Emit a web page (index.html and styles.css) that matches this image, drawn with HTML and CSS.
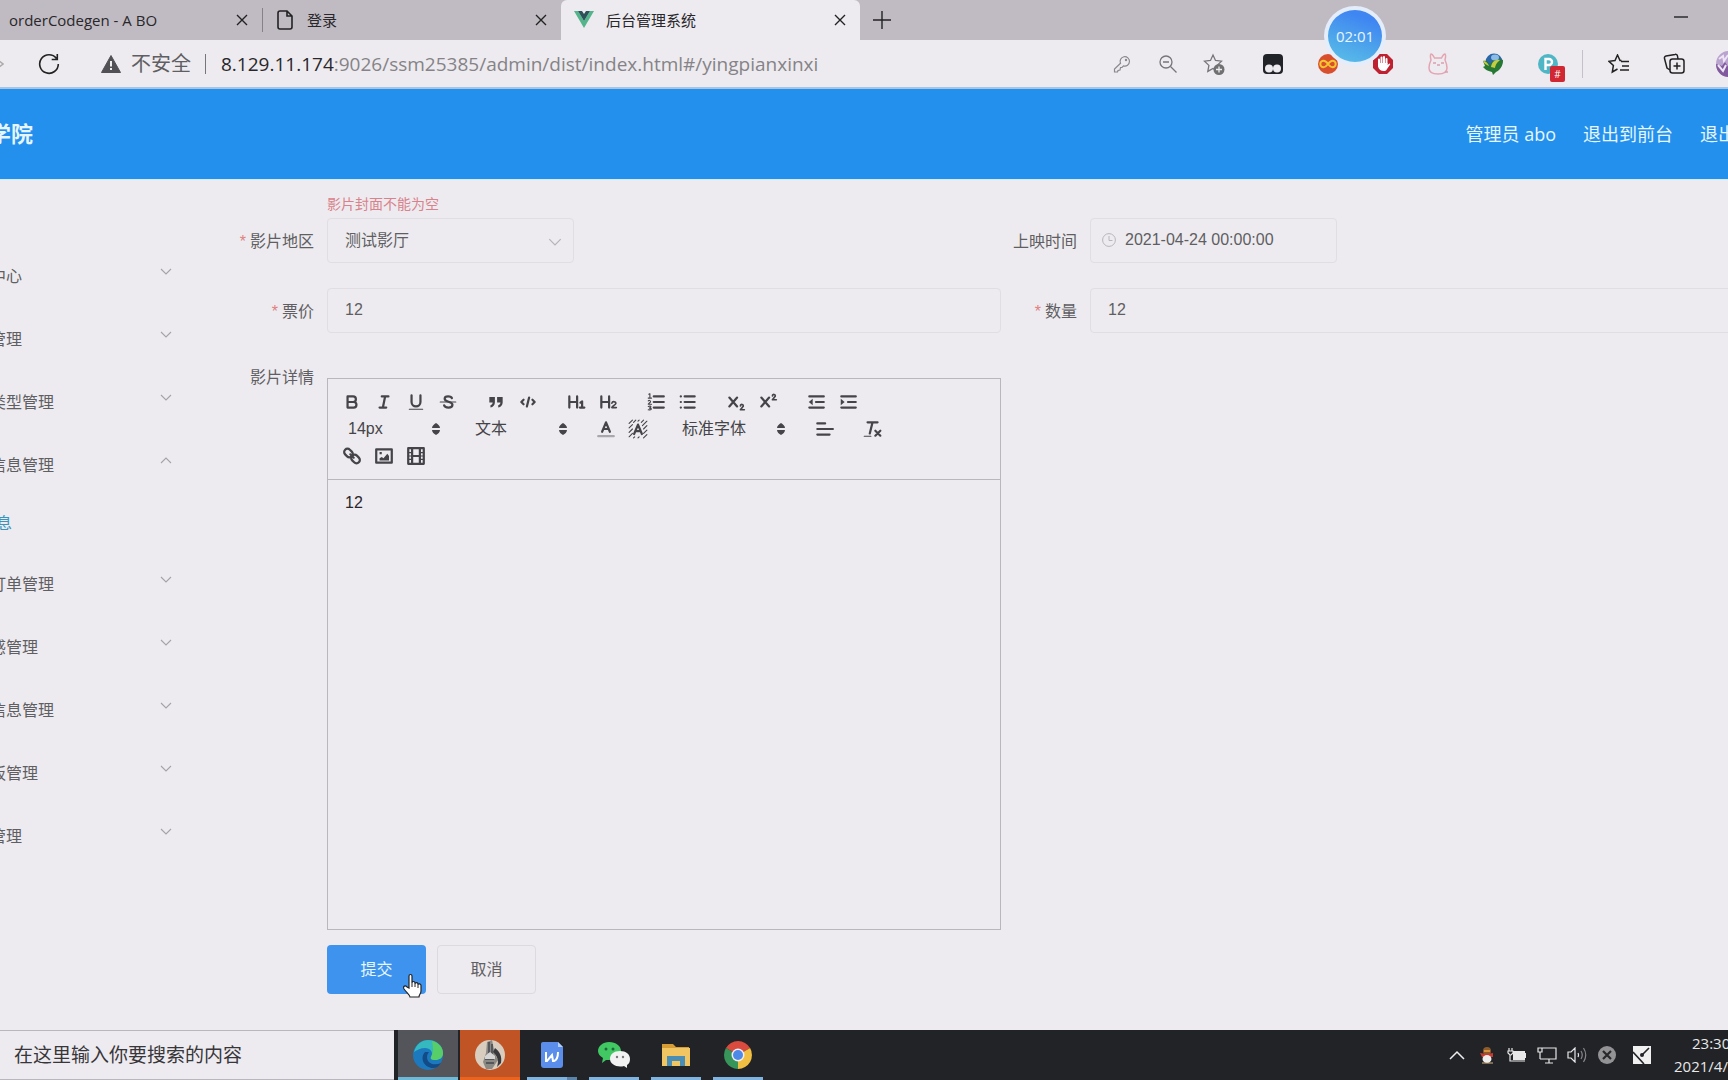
FILE: index.html
```html
<!DOCTYPE html>
<html lang="zh-CN">
<head>
<meta charset="utf-8">
<title>后台管理系统</title>
<link rel="stylesheet" href="styles.css">
</head>
<body>
<svg class="sprite" aria-hidden="true">
  <symbol id="close" viewBox="0 0 12 12"><path d="M1 1l10 10M11 1L1 11" fill="none" stroke="#222" stroke-width="1.4"/></symbol>
  <symbol id="chevron" viewBox="0 0 12 7"><path d="M1 1l5 5 5-5" fill="none" stroke="currentColor" stroke-width="1.1"/></symbol>
  <symbol id="updown" viewBox="0 0 8 12"><path d="M4 0C6 1 8 3 8 5H0C0 3 2 1 4 0zM0 7h8c0 2-2 4-4 5C2 11 0 9 0 7z" fill="currentColor"/></symbol>
</svg>

<div class="tabstrip">
  <div class="tab tab-first"><span class="tab-title">orderCodegen - A BO</span><button class="tab-close" aria-label="关闭"><svg width="12" height="12"><use href="#close"/></svg></button></div>
  <div class="tab tab-second">
    <svg class="file-icon" width="16" height="20" viewBox="0 0 16 20"><path d="M3 1h7l5 5v11a2 2 0 0 1-2 2H3a2 2 0 0 1-2-2V3a2 2 0 0 1 2-2zM10 1v5h5" fill="none" stroke="#222" stroke-width="1.6"/></svg>
    <span class="tab-title">登录</span><button class="tab-close" aria-label="关闭"><svg width="12" height="12"><use href="#close"/></svg></button>
  </div>
  <div class="tab tab-active">
    <svg width="20" height="17" viewBox="0 0 20 17"><path d="M0 0h4l6 10L16 0h4L10 17z" fill="#53b58c"/><path d="M4 0h4l2 3 2-3h4l-6 10z" fill="#2d5158"/></svg>
    <span class="tab-title">后台管理系统</span><button class="tab-close" aria-label="关闭"><svg width="12" height="12"><use href="#close"/></svg></button>
  </div>
  <button class="new-tab" aria-label="新建标签页"><svg width="18" height="18" viewBox="0 0 18 18"><path d="M9 0v18M0 9h18" stroke="#222" stroke-width="1.4"/></svg></button>
  <button class="minimize" aria-label="最小化"><svg width="14" height="2"><path d="M0 1h14" stroke="#222" stroke-width="1.4"/></svg></button>
</div>

<div class="toolbar">
  <svg class="forward" width="4" height="12" viewBox="0 0 4 12"><path d="M-2 2l5 4-5 4" fill="none" stroke="#aaa" stroke-width="1.5"/></svg>
  <button class="reload" aria-label="刷新"><svg width="22" height="22" viewBox="0 0 22 22"><path d="M18.500 5.500A9.300 9.300 0 1 0 20.300 11M19.300 1v5.500h-5.600" fill="none" stroke="#222" stroke-width="1.600"/></svg></button>
  <div class="address">
    <svg width="20" height="18" viewBox="0 0 20 18"><path d="M10 0.500L19.500 17.500H0.500z" fill="#505055" stroke="#505055" stroke-linejoin="round"/><path d="M10 6v5.500M10 13v2" stroke="#eee" stroke-width="2"/></svg>
    <span class="unsafe">不安全</span>
    <span class="address-line"></span>
    <span class="url"><span class="host">8.129.11.174</span>:9026/ssm25385/admin/dist/index.html#/yingpianxinxi</span>
  </div>
  <div class="page-tools">
    <button aria-label="密码"><svg width="18" height="18" viewBox="0 0 18 18"><path d="M7.500 8.300a4.700 4.700 0 1 1 3 2.600L9 12.500H7.500L7 15l-2 .5-.5 1.500H1.500v-3z" fill="none" stroke="#8a888c" stroke-width="1.200"/><circle cx="13" cy="5" r="1.200" fill="#8a888c"/></svg></button>
    <button aria-label="缩小"><svg width="18" height="18" viewBox="0 0 18 18"><circle cx="7" cy="7" r="6" fill="none" stroke="#77757a" stroke-width="1.300"/><path d="M4 7h6M11.500 11.500l6 6" stroke="#77757a" stroke-width="1.300"/></svg></button>
    <button aria-label="收藏此页"><svg width="22" height="22" viewBox="0 0 22 22"><path d="M10 2l2.500 5.500 6 .7-4.400 4.200 1.100 6L10 15.500 4.800 18.400l1.100-6L1.500 8.200l6-.7z" fill="none" stroke="#77757a" stroke-width="1.300"/><circle cx="16" cy="16.500" r="5.500" fill="#706f72"/><path d="M16 13.500v6M13 16.500h6" stroke="#eee" stroke-width="1.300"/></svg></button>
  </div>
  <div class="extensions">
    <button aria-label="脚本"><svg width="20" height="20" viewBox="0 0 20 20"><rect width="20" height="20" rx="4" fill="#222329"/><circle cx="6" cy="14.500" r="4" fill="#edebef"/><circle cx="14" cy="14.500" r="4" fill="#edebef"/></svg></button>
    <button aria-label="无限"><svg width="20" height="20" viewBox="0 0 20 20"><circle cx="10" cy="10" r="10" fill="#d94f2d"/><path d="M10 10C8 7 6.500 6.800 5.500 6.800a3.200 3.200 0 0 0 0 6.400C7 13.200 8 12.500 10 10s3-3.200 4.500-3.200a3.200 3.200 0 0 1 0 6.400C13 13.200 12 12.500 10 10z" fill="none" stroke="#f5c630" stroke-width="2"/></svg></button>
    <button aria-label="拦截"><svg width="20" height="20" viewBox="0 0 20 20"><path d="M6 0h8l6 6v8l-6 6H6l-6-6V6z" fill="#be2230"/><path d="M6 10V5.500M8.500 9V3.500M11 9V3M13.500 10V5" stroke="#fff" stroke-width="2" stroke-linecap="round"/><path d="M5 9h9.500v2l2-1.500c1 .2.800 1 .3 1.500L13 16.500c-3 1.500-7 0-8-4z" fill="#fff"/></svg></button>
    <button aria-label="小猫"><svg width="22" height="22" viewBox="0 0 22 22"><path d="M4 7c-.5-2-1-5 0-6 1.500 0 2.500 2 3.500 4h7c1-2 2-4 3.500-4 1 1 .5 4 0 6 1 2 2 5 2 8 0 4-3 6-9 6s-9-2-9-6c0-3 1-6 2-8z" fill="none" stroke="#e4a5b3" stroke-width="1.500"/><path d="M6 10h3M14 10h3M10 12h3M18 19h3" stroke="#d9a0ae" stroke-width="1.600"/></svg></button>
    <button aria-label="下载"><svg width="20" height="22" viewBox="0 0 20 22"><circle cx="11" cy="9" r="8.500" fill="#2b67a7"/><path d="M0 8c3-1 6 1 7 5 1-5 6-8 13-6 0 6-3 10-7 12l-3 3-1-3C4 18 2 16 0 14l2-1z" fill="#267832"/><path d="M8 14c1-6 5-8 9-7-2 2-4 3-5 8zM0 8c3 0 5 2 6 5-2-1-5-2-6-5z" fill="#c4cc41"/><ellipse cx="12" cy="4.500" rx="4" ry="3" fill="#8cbbe5"/></svg></button>
    <button class="badged" aria-label="代理"><svg width="20" height="20" viewBox="0 0 20 20"><circle cx="10" cy="10" r="10" fill="#4fb6c6"/><path d="M7.500 16V5h3.500a3 3 0 0 1 0 6H8" fill="none" stroke="#fff" stroke-width="2.400"/></svg><span class="badge">#</span></button>
  </div>
  <div class="browser-tools">
    <button aria-label="收藏夹"><svg width="22" height="20" viewBox="0 0 22 20"><path d="M13.500 6.500l-1.500 0L9.500 1 7 6.500l-6 .8 4.400 4.200L4.300 18l5.200-3M13 7.500h8M14 12h7M12 16h9" fill="none" stroke="#222" stroke-width="1.500"/></svg></button>
    <button aria-label="集锦"><svg width="22" height="22" viewBox="0 0 22 22"><rect x="7" y="6" width="14" height="14" rx="2.500" fill="none" stroke="#222" stroke-width="1.500"/><path d="M14 9.500v7M10.500 13h7M15 6l-.5-3a2 2 0 0 0-2.500-1.600L3 3a2 2 0 0 0-1.500 2.500L4 15l3 2" fill="none" stroke="#222" stroke-width="1.500"/></svg></button>
    <button aria-label="个人资料"><svg width="26" height="26" viewBox="0 0 26 26"><circle cx="13" cy="13" r="13" fill="#b9a3cf"/><path d="M0 13l6 2 3-4 4 6v9C5 26 0 20 0 13z" fill="#815a9e"/><path d="M3 8l4-3 1 5 4-6M2 14l5 6 3-6" fill="none" stroke="#eee4f4" stroke-width="2"/></svg></button>
  </div>
</div>
<div class="recorder">02:01</div>

<header class="header">
  <h1 class="brand">学院</h1>
  <nav class="header-nav"><span>管理员 abo</span><a href="#">退出到前台</a><a href="#">退出</a></nav>
</header>

<div class="content">
  <nav class="sidebar">
    <a class="menu-item" href="#">中心<svg width="12" height="7"><use href="#chevron"/></svg></a>
    <a class="menu-item" href="#">管理<svg width="12" height="7"><use href="#chevron"/></svg></a>
    <a class="menu-item" href="#">类型管理<svg width="12" height="7"><use href="#chevron"/></svg></a>
    <a class="menu-item open" href="#">信息管理<svg width="12" height="7"><use href="#chevron"/></svg></a>
    <a class="submenu-item" href="#">息</a>
    <a class="menu-item" href="#">订单管理<svg width="12" height="7"><use href="#chevron"/></svg></a>
    <a class="menu-item" href="#">感管理<svg width="12" height="7"><use href="#chevron"/></svg></a>
    <a class="menu-item" href="#">信息管理<svg width="12" height="7"><use href="#chevron"/></svg></a>
    <a class="menu-item" href="#">板管理<svg width="12" height="7"><use href="#chevron"/></svg></a>
    <a class="menu-item" href="#">管理<svg width="12" height="7"><use href="#chevron"/></svg></a>
  </nav>

  <form class="form">
    <p class="error">影片封面不能为空</p>
    <div class="fields">
      <div class="field">
        <label for="area"><span class="required">*</span>影片地区</label>
        <div class="control short">
          <select id="area"><option>测试影厅</option></select>
          <svg class="select-arrow" width="14" height="8"><use href="#chevron"/></svg>
        </div>
      </div>
      <div class="field">
        <label for="date">上映时间</label>
        <div class="control short">
          <svg class="clock-icon" width="14" height="14" viewBox="0 0 14 14"><circle cx="7" cy="7" r="6.400" fill="none" stroke="#b8b6bb"/><path d="M7 3v4.500h3.500" fill="none" stroke="#b8b6bb"/></svg>
          <input class="date" id="date" type="text" value="2021-04-24 00:00:00">
        </div>
      </div>
      <div class="field">
        <label for="price"><span class="required">*</span>票价</label>
        <div class="control"><input id="price" type="text" value="12"></div>
      </div>
      <div class="field">
        <label for="count"><span class="required">*</span>数量</label>
        <div class="control"><input id="count" type="text" value="12"></div>
      </div>
      <div class="field detail">
        <label for="detail">影片详情</label>
        <div class="editor">
          <div class="editor-tools">
            <div class="tool-row">
              <div class="tool-group">
                <button type="button" aria-label="粗体"><svg viewBox="0 0 18 18"><path d="M5 4h5a2.500 2.500 0 0 1 0 5H5zM5 9h5.500a2.500 2.500 0 0 1 0 5H5z"/></svg></button>
                <button type="button" aria-label="斜体"><svg viewBox="0 0 18 18"><path d="M7 4h6M5 14h6M8 14l2-10"/></svg></button>
                <button type="button" aria-label="下划线"><svg viewBox="0 0 18 18"><path d="M5 3v6a4 4 0 0 0 8 0V3"/><path class="thin" d="M3 15.500h12"/></svg></button>
                <button type="button" aria-label="删除线"><svg viewBox="0 0 18 18"><path class="thin" d="M2 9h14"/><path d="M12.500 5.500C12 3.500 6 3 6 6c0 3.500 7 2 7 5.500 0 3.500-7 3-7.500.5"/></svg></button>
              </div>
              <div class="tool-group">
                <button type="button" aria-label="引用"><svg viewBox="0 0 18 18"><path class="fill" d="M3 4.500h5v5c0 2.500-1.500 4-4 4.500v-2c1.500-.5 2-1.500 2-2.500H3zM10 4.500h5v5c0 2.500-1.500 4-4 4.500v-2c1.500-.5 2-1.500 2-2.500h-3z"/></svg></button>
                <button type="button" aria-label="代码"><svg viewBox="0 0 18 18"><path d="M5 7L3 9l2 2M13 7l2 2-2 2M10 5l-2 8"/></svg></button>
              </div>
              <div class="tool-group">
                <button type="button" aria-label="标题一"><svg viewBox="0 0 18 18"><path d="M3 4v10M10 4v10M3 9h7M13 9.500l1.500-1V14M12.500 14h4"/></svg></button>
                <button type="button" aria-label="标题二"><svg viewBox="0 0 18 18"><path d="M3 4v10M10 4v10M3 9h7"/><path class="mid" d="M12.500 10c.5-2 4-1.500 3.500.5-.3 1.200-3 2-3.500 3.500h4"/></svg></button>
              </div>
              <div class="tool-group">
                <button type="button" aria-label="有序列表"><svg viewBox="0 0 18 18"><path d="M7 4h9M7 9h9M7 14h9"/><path class="thin" d="M2.500 2l1-.5v4M2 5.500h3M2 8c1-1 2.500 0 2 1l-2 2h3M2 13c3-1 3 1 1 1.500 3 0 2 2-1 1.500"/></svg></button>
                <button type="button" aria-label="无序列表"><svg viewBox="0 0 18 18"><path d="M6 4h9M6 9h9M6 14h9M2.500 4h.1M2.500 9h.1M2.500 14h.1"/></svg></button>
              </div>
              <div class="tool-group">
                <button type="button" aria-label="下标"><svg viewBox="0 0 18 18"><path d="M3 5l7 8M10 5l-7 8"/><path class="mid" d="M13 12.500c0-2 3-1.500 2.500.3L13 16h3.500"/></svg></button>
                <button type="button" aria-label="上标"><svg viewBox="0 0 18 18"><path d="M3 5l7 8M10 5l-7 8"/><path class="mid" d="M13 3.500c0-2 3-1.500 2.500.3L13 7h3.500"/></svg></button>
              </div>
              <div class="tool-group">
                <button type="button" aria-label="减少缩进"><svg viewBox="0 0 18 18"><path d="M3 4h13M9 9h7M3 14h13"/><path class="fill" d="M6 6v6L2.500 9z"/></svg></button>
                <button type="button" aria-label="增加缩进"><svg viewBox="0 0 18 18"><path d="M3 4h13M9 9h7M3 14h13"/><path class="fill" d="M2.500 6v6L6 9z"/></svg></button>
              </div>
            </div>
            <div class="tool-row">
              <div class="picker"><select aria-label="字号"><option>14px</option></select><svg width="8" height="12"><use href="#updown"/></svg></div>
              <div class="picker"><select aria-label="段落"><option>文本</option></select><svg width="8" height="12"><use href="#updown"/></svg></div>
              <div class="tool-group">
                <button type="button" aria-label="文字颜色"><svg viewBox="0 0 18 18"><path d="M5.500 11.500L9 3l3.500 8.500M7 9h4"/><path stroke="#a9a7ac" d="M2 15.500h14"/></svg></button>
                <button type="button" aria-label="背景颜色"><svg viewBox="0 0 18 18"><path class="thin" d="M1 4l3-3M1 8l3-3M1 12l3-3M1 16l3-3M5 3l2-2M9 2l1-1M12 3l2-2M13 6l4-4M14 9l3-3M14 13l3-3M14 17l3-3M9 17l1-1M5 17l1-1"/><path d="M5.500 13.500L9 5l3.500 8.500M7 11h4"/></svg></button>
              </div>
              <div class="picker picker-font"><select aria-label="字体"><option>标准字体</option></select><svg width="8" height="12"><use href="#updown"/></svg></div>
              <div class="tool-group"><button type="button" aria-label="对齐"><svg viewBox="0 0 18 18"><path d="M3 4h7M3 9h14M3 14h11"/></svg></button></div>
              <div class="tool-group"><button type="button" aria-label="清除格式"><svg viewBox="0 0 18 18"><path d="M5 3h9M9.500 3L7 13M12 10.500l4.500 4.500M16.500 10.500L12 15"/><path class="thin" d="M2 15.500h6"/></svg></button></div>
            </div>
            <div class="tool-row">
              <div class="tool-group">
                <button type="button" aria-label="链接"><svg viewBox="0 0 18 18"><rect x="1.500" y="3.500" width="8.500" height="6" rx="3" transform="rotate(45 6 6.500)"/><rect x="8" y="8.500" width="8.500" height="6" rx="3" transform="rotate(45 12 11.500)"/><path d="M7.500 7.500l3 3"/></svg></button>
                <button type="button" aria-label="图片"><svg viewBox="0 0 18 18"><rect x="2" y="3" width="14" height="12"/><path class="fill" d="M5 13v-2l2-1 1.500 1L12 7l1.500 2v4zM5 5.500h2v2H5z"/></svg></button>
                <button type="button" aria-label="视频"><svg viewBox="0 0 18 18"><rect x="2" y="2" width="14" height="14"/><path d="M5.500 2v14M12.500 2v14M5.500 9h7"/><path class="thin" d="M2 6h3M2 9h3M2 12h3M13 6h3M13 9h3M13 12h3"/></svg></button>
              </div>
            </div>
          </div>
          <textarea id="detail">12</textarea>
        </div>
      </div>
    </div>
    <div class="actions">
      <button class="submit" type="button">提交<svg class="cursor" width="20" height="26" viewBox="0 0 20 26"><path d="M7 15V3c0-2 3-2 3 0v7c0-2 3-2 3 0v1c0-2 3-1.500 3 0v1c0-2 3-1 3 .5V18c0 3-2 3.500-2 6H8c0-2-3-4-6-8-1.500-3 1.500-4 3-2z" fill="#fff" stroke="#222" stroke-width="1.200"/><path d="M10 10v4M13 11v3M16 12v3" stroke="#222"/></svg></button>
      <button class="cancel" type="button">取消</button>
    </div>
  </form>
</div>

<footer class="taskbar">
  <input class="search" type="text" aria-label="搜索" placeholder="在这里输入你要搜索的内容">
  <div class="apps">
    <button class="app current" aria-label="Edge"><svg width="30" height="30" viewBox="0 0 30 30"><circle cx="15" cy="15" r="15" fill="#1c79bd"/><path d="M1 12C3 4 9 0 15 0c9 0 15 6 15 13 0 5-4 7-8 7-3 0-5-1-4-3 3-5-1-9-6-9-4 0-8 2-11 4z" fill="#35b8be"/><path d="M19 1c7 2 11 7 11 12 0 5-4 7-8 7-3 0-5-1-4-3 3-5 2-10 1-16z" fill="#58ce68"/><path d="M12 12c-6 7 0 16 8 16 4 0 6-2 8-5-6 3-14 1-14-6 0-2 1-4 2-5z" fill="#124b86"/></svg></button>
    <button class="app alert" aria-label="头像"><svg width="30" height="30" viewBox="0 0 30 30"><circle cx="15" cy="15" r="15" fill="#d9cdbf"/><path d="M12 2l5-2 3 14 3 6-6 9h-6l-3-7 3-9z" fill="#8b8984"/><path d="M20 8c5 4 7 8 6 15l-4 4c2-6 1-10-4-15z" fill="#37393c"/><path d="M14 2v11M17 4v10M10 19h9M11 23h8" stroke="#55575a" stroke-width="2"/><path d="M10 16l5-4 5 4v3H10z" fill="#d5d5d5"/></svg></button>
    <button class="app multi" aria-label="WPS"><svg width="24" height="28" viewBox="0 0 24 28"><path d="M3 1h15l5 5v18a3 3 0 0 1-3 3H4a3 3 0 0 1-3-3V3a2 2 0 0 1 2-2z" fill="#5b8deb"/><path d="M18 1v5h5z" fill="#b5cef8"/><path d="M6 11v9h1l5-6 1 6h1c3-1 4-4 4-9" fill="none" stroke="#fff" stroke-width="2"/></svg></button>
    <button class="app running" aria-label="微信"><svg width="32" height="26" viewBox="0 0 32 26"><path d="M11 0c7 0 12 4 12 9s-5 9-12 9l-3 0-4 3 1-5C2 14 0 12 0 9 0 4 5 0 11 0z" fill="#41c863"/><circle cx="8" cy="7" r="1.500" fill="#1c6938"/><circle cx="15" cy="7" r="1.500" fill="#1c6938"/><path d="M22 9c6 0 10 3 10 8 0 3-1 5-3 6v3l-3-2c-7 2-14-2-14-7s4-8 10-8z" fill="#f2f2f2"/><circle cx="19" cy="15" r="1.200" fill="#777"/><circle cx="25" cy="15" r="1.200" fill="#777"/></svg></button>
    <button class="app running" aria-label="资源管理器"><svg width="28" height="24" viewBox="0 0 28 24"><path d="M0 1h11l3 3h13v19H0z" fill="#d69c35"/><path d="M0 5h28v18H0z" fill="#f1c561"/><path d="M5 23V13h18v10h-5v-5h-8v5z" fill="#4b8eb5"/></svg></button>
    <button class="app running" aria-label="Chrome"><svg width="28" height="28" viewBox="0 0 28 28"><path d="M14 14L1.900 7A14 14 0 0 1 26.100 7z" fill="#d94b3f"/><path d="M14 14L26.100 7A14 14 0 0 1 14 28z" fill="#f1c043"/><path d="M14 14v14A14 14 0 0 1 1.900 7z" fill="#38955a"/><circle cx="14" cy="14" r="6.500" fill="#f0eef0"/><circle cx="14" cy="14" r="5" fill="#4f89e8"/></svg></button>
  </div>
  <div class="tray">
    <button aria-label="显示隐藏图标"><svg width="16" height="10" viewBox="0 0 16 10"><path d="M1 9l7-7 7 7" fill="none" stroke="#eee" stroke-width="1.500"/></svg></button>
    <button aria-label="QQ"><svg width="14" height="17" viewBox="0 0 14 17"><ellipse cx="7" cy="4" rx="4" ry="4" fill="#8e5b2d"/><path d="M0 6l7 1 6-1v4H2z" fill="#c53a32"/><ellipse cx="7" cy="12" rx="4.500" ry="4" fill="#eee"/><path d="M4 4h6" stroke="#e9a545" stroke-width="1.500"/><path d="M2 16h11" stroke="#d6b68a"/></svg></button>
    <button aria-label="电池"><svg width="20" height="14" viewBox="0 0 20 14"><path d="M6 3h12v2h1v5h-1v2H6z" fill="#e8e8e8"/><path d="M2 0v3M5 0v3M1 3h5v2L4 7H3L1 5zM3 7v6h15" fill="none" stroke="#e8e8e8" stroke-width="1.200"/></svg></button>
    <button aria-label="网络"><svg width="20" height="18" viewBox="0 0 20 18"><path d="M5 2h14v11H3M12 13v4M8 17h8M1 2h4v4H1zM3 6v7" fill="none" stroke="#e8e8e8" stroke-width="1.200"/></svg></button>
    <button aria-label="音量"><svg width="20" height="16" viewBox="0 0 20 16"><path d="M1 5h3l4-4v14l-4-4H1zM11 6q1 2 0 4" fill="none" stroke="#e8e8e8" stroke-width="1.200"/><path d="M14 4q2.500 4 0 8M16.500 1q4.500 7 0 14" fill="none" stroke="#87878a" stroke-width="1.200"/></svg></button>
    <button aria-label="安全"><svg width="18" height="18" viewBox="0 0 18 18"><circle cx="9" cy="9" r="9" fill="#939295"/><path d="M5 5l8 8M13 5l-8 8" stroke="#29292c" stroke-width="2.200"/></svg></button>
    <button class="pen" aria-label="手写"><svg width="18" height="18" viewBox="0 0 18 18"><path d="M0 0h18v18H0z" fill="#f0f0f1"/><path d="M0 6l11 12M9 9l7-7" stroke="#222427" stroke-width="1.600"/><circle cx="9" cy="9" r="2" fill="#222427"/></svg></button>
  </div>
  <div class="clock"><span class="time">23:30</span><span>2021/4/</span></div>
</footer>
</body>
</html>
```
FILE: styles.css
```css
* { box-sizing: border-box; }

body {
  margin: 0;
  min-height: 100vh;
  display: flex;
  flex-direction: column;
  overflow-x: hidden;
  position: relative;
  background: #edebef;
  color: #5f5e63;
  font: 16px/20px "Liberation Sans", "Noto Sans CJK SC", sans-serif;
}

button, input, select, textarea {
  margin: 0;
  padding: 0;
  border: 0;
  outline: 0;
  background: none;
  color: inherit;
  font: inherit;
  appearance: none;
}

button {
  display: flex;
  align-items: center;
  justify-content: center;
}

a { color: inherit; text-decoration: none; }
svg { flex: none; }
.sprite { position: absolute; width: 0; height: 0; }

/* Browser window */
.tabstrip, .toolbar, .recorder {
  font-family: "Open Sans", "Noto Sans CJK SC", sans-serif;
}

.tabstrip {
  display: flex;
  height: 40px;
  background: #c0bbc2;
  color: #29272b;
  font-size: 15px;
}

.tab { display: flex; align-items: center; padding: 0 14px 1px 0; }
.tab-title { white-space: nowrap; }
.tab-close { width: 12px; margin-left: auto; }
.tab-first { width: 262px; padding-left: 9px; }
.tab-second { width: 299px; padding-left: 15px; gap: 14px; position: relative; }
.tab-second::before { content: ""; position: absolute; left: 0; top: 8px; width: 1px; height: 24px; background: #858188; }
.tab-active { width: 299px; padding-left: 13px; gap: 12px; background: #edebef; border-radius: 6px 6px 0 0; }
.new-tab { width: 44px; }
.minimize { width: 46px; margin-left: auto; margin-right: 24px; height: 34px; }

.toolbar {
  display: flex;
  align-items: center;
  height: 49px;
  overflow: hidden;
  border-bottom: 2px solid #a9c4e2;
}

.reload { width: 90px; }
.address { display: flex; align-items: center; flex: 1; padding-left: 7px; }
.unsafe { margin-left: 10px; font-size: 20px; white-space: nowrap; }
.address-line { width: 1px; height: 20px; margin: 0 15px 0 14px; background: #77757a; }
.url { font-size: 19px; line-height: 28px; color: #858387; white-space: nowrap; }
.host { color: #29272b; }
.page-tools, .extensions, .browser-tools { display: flex; }
.page-tools button { width: 46px; }
.extensions { margin-left: 8px; }
.extensions button, .browser-tools button { width: 55px; height: 28px; }
.browser-tools { margin-left: 7px; margin-right: -28px; padding-left: 8px; border-left: 1px solid #c4c1c8; }
.badged { position: relative; }
.badge {
  position: absolute;
  right: 10px;
  bottom: -4px;
  width: 15px;
  height: 16px;
  border-radius: 2px;
  background: #d02732;
  color: #fff;
  font-size: 10px;
  line-height: 16px;
}

.recorder {
  position: absolute;
  top: 6px;
  right: 342px;
  width: 62px;
  height: 60px;
  border: 4px solid #e4edfb;
  border-radius: 50%;
  background: linear-gradient(200deg, #3f86f2 20%, #4fa8ea 65%, #5ac0e8);
  color: #e8f4ff;
  font-size: 15px;
  line-height: 52px;
  text-align: center;
}

/* Page header */
.header {
  display: flex;
  align-items: center;
  justify-content: space-between;
  height: 91px;
  overflow: hidden;
  border-bottom: 1px solid #d2edf5;
  background: #2390ee;
  color: #e6f6fc;
}

.brand { margin: 2px 0 0 -11px; font-size: 22px; line-height: 28px; font-weight: 700; }
.header-nav { display: flex; gap: 27px; margin-right: -8px; font: 18px/24px "Open Sans", "Noto Sans CJK SC", sans-serif; white-space: nowrap; }

/* Sidebar and form */
.content { display: flex; flex: 1; overflow: hidden; }
.sidebar { flex: none; width: 238px; padding-top: 65px; }
.menu-item { display: flex; align-items: center; justify-content: space-between; width: 182px; height: 63px; margin-left: -10px; }
.menu-item svg { margin-bottom: 10px; color: #a5a3a8; }
.menu-item.open svg { transform: rotate(180deg); }
.submenu-item { display: flex; align-items: center; height: 56px; margin-left: -4px; padding-bottom: 3px; color: #3b94bc; }

.form { flex: 1; margin-right: -36px; padding-top: 17px; }
.error { margin: 0 0 7px 89px; color: #d9828c; font-size: 14px; line-height: 14px; }
.fields { display: grid; grid-template-columns: 1fr 1fr; row-gap: 25px; }
.field { display: flex; }
.field label { flex: none; width: 89px; padding: 14px 13px 0 0; text-align: right; white-space: nowrap; }
.required { margin-right: 4px; color: #e08080; }
.control { position: relative; flex: 1; height: 45px; }
.control.short { flex: none; width: 247px; }
.control input, .control select { width: 100%; height: 100%; padding: 0 17px; border: 1px solid #e0dee3; border-radius: 4px; }
.control input { padding-bottom: 2px; }
.control .date { padding-left: 34px; }
.select-arrow { position: absolute; right: 12px; top: 20px; color: #b5b3b8; }
.clock-icon { position: absolute; left: 12px; top: 15px; }
.detail label { padding-top: 10px; }

.editor { flex: 1; margin-top: 20px; border: 1px solid #b9b7bd; color: #454449; }
.editor-tools { padding: 9px 8px 10px; border-bottom: 1px solid #b9b7bd; }
.tool-row { display: flex; gap: 16px; height: 27px; }
.tool-group { display: flex; }
.tool-group button { width: 32px; height: 27px; }
.tool-group svg { width: 20px; height: 20px; fill: none; stroke: currentColor; stroke-width: 2; stroke-linecap: round; stroke-linejoin: round; }
.tool-group .thin { stroke-width: 1; }
.tool-group .mid { stroke-width: 1.5; }
.tool-group .fill { fill: currentColor; stroke-width: 0; }
.picker { position: relative; width: 111px; }
.picker-font { width: 122px; }
.picker select { width: 100%; height: 27px; padding-left: 12px; }
.picker svg { position: absolute; right: 7px; top: 8px; }
.editor textarea { display: block; width: 100%; height: 449px; padding: 13px 17px; resize: none; color: #29272b; }

.actions { display: flex; gap: 11px; padding: 15px 0 36px 89px; }
.actions button { width: 99px; height: 49px; border-radius: 4px; }
.submit { position: relative; background: #3d93ee; color: #e8f7ff; }
.cancel { border: 1px solid #dcdae0; }
.cursor { position: absolute; left: 75px; top: 28px; }

/* Desktop taskbar */
.taskbar {
  display: flex;
  height: 50px;
  overflow: hidden;
  background: #222327;
  color: #e8e8e8;
  font-family: "Open Sans", "Noto Sans CJK SC", sans-serif;
}

.search { width: 394px; padding-left: 14px; border: solid #b9b7bd; border-width: 1px 0; background: #edebef; font-size: 19px; }
.search::placeholder { color: #38363a; opacity: 1; }
.apps { display: flex; gap: 2px; margin-left: 4px; }
.app { width: 60px; height: 50px; position: relative; }
.app::after { content: ""; position: absolute; left: 5px; right: 5px; bottom: 0; height: 3px; background: #7fb3e0; }
.current { background: #54555a; }
.alert { background: #c05425; }
.current::after { left: 0; right: 0; background: #6eb8d8; }
.alert::after { left: 0; right: 0; background: #ea6420; }
.multi::after { background: linear-gradient(90deg, #7fb3e0 40px, #5c83a8 40px); }
.tray { display: flex; margin-left: auto; }
.tray button { width: 30px; }
.tray .pen { width: 40px; }
.clock { width: 66px; padding: 2px 0 0 12px; font-size: 15px; line-height: 23px; white-space: nowrap; }
.clock span { display: block; }
.clock .time { padding-left: 18px; }
```
